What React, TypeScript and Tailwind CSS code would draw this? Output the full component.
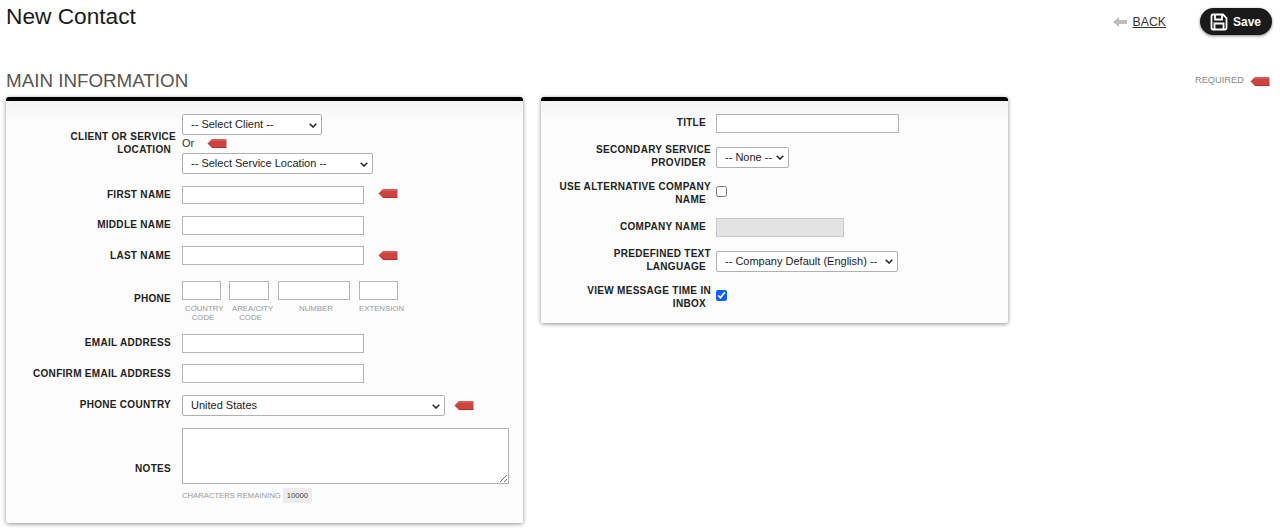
function RequiredTag({ className = "" }: { className?: string }) {
  return (
    <svg width="20" height="11" viewBox="0 0 20 11" className={`shrink-0 ${className}`}>
      <path d="M0.5 5.5 L5 1 H18.5 Q19.5 1 19.5 2 V9 Q19.5 10 18.5 10 H5 Z" fill="#cc4440" />
      <path d="M5 1 H19 V3 H5 Z" fill="#d65a55" />
      <path d="M5 9 H19.5 V10 H5 Z" fill="#b5302c" />
    </svg>
  );
}

function Label({ children, wide = false, flat = false }: { children: React.ReactNode; wide?: boolean; flat?: boolean }) {
  return (
    <label
      className={`${wide ? "ml-[15px] w-[155px]" : "ml-[21px] w-[149px]"} ${flat ? "" : "-mt-[1px] mb-[1px]"} block shrink-0 text-right text-[10px] leading-[13px] font-bold tracking-[0.3px] text-[#222]`}
    >
      {children}
      <span className="inline-block w-[5px]" />
    </label>
  );
}

function TextInput({ className = "" }: { className?: string }) {
  return <input type="text" className={`block border border-[#b5b5b5] bg-white ${className}`} />;
}

function Select({ label, className = "" }: { label: string; className?: string }) {
  return (
    <span className={`relative block ${className}`}>
      <select className="block h-full w-full appearance-none rounded-[2px] border border-[#b0b0b0] bg-white pl-[8px] text-[11px] text-[#222]">
        <option>{label}</option>
      </select>
      <svg width="8" height="5" viewBox="0 0 8 5" className="absolute top-1/2 right-[5px] -mt-[2px]">
        <path d="M0.7 0.7 L4 4 L7.3 0.7" fill="none" stroke="#222" strokeWidth="1.5" />
      </svg>
    </span>
  );
}

function Row({ className = "", children }: { className?: string; children: React.ReactNode }) {
  return <div className={`flex items-center ${className}`}>{children}</div>;
}

function PhonePart({ label, width, inset = "pl-[3px]" }: { label: React.ReactNode; width: string; inset?: string }) {
  return (
    <div className={width}>
      <TextInput className="h-[19px] w-full" />
      <div className={`mt-[4px] text-center text-[7.8px] leading-[9px] whitespace-nowrap text-[#999] ${inset}`}>{label}</div>
    </div>
  );
}

const panelClass =
  "rounded-[3px] border-t-4 border-black bg-gradient-to-b from-[#f3f3f3] to-[#fcfcfc] to-[20px] shadow-[0_1px_4px_rgba(0,0,0,0.45)]";

export default function App() {
  return (
    <div className="h-[528px] w-[1280px] overflow-hidden bg-white font-['Liberation_Sans',Arial,sans-serif]">
      <div className="flex items-start justify-between pr-[8px] pl-[6px]">
        <h1 className="pt-[3px] text-[22.7px] leading-[27px] text-[#1a1a1a]">New Contact</h1>
        <div className="flex items-center pt-[8px]">
          <svg width="14" height="10" viewBox="0 0 14 10" className="mt-[1px] mr-[6px]">
            <path d="M0 5 L6 0 V3 H14 V7 H6 V10 Z" fill="#bdbdbd" />
          </svg>
          <a className="mt-[1px] text-[12.3px] text-[#333] underline">BACK</a>
          <button className="ml-[34px] flex h-[27px] w-[72px] items-center rounded-full bg-[#1a1a1a] pl-[10px] text-[12px] font-bold text-white shadow-[0_1px_3px_rgba(0,0,0,0.5)]">
            <svg width="18" height="18" viewBox="0 0 18 18" fill="none" stroke="#fff" strokeWidth="1.8" className="mr-[5px]">
              <path d="M3 1.5 H13 L16.5 5 V15 Q16.5 16.5 15 16.5 H3 Q1.5 16.5 1.5 15 V3 Q1.5 1.5 3 1.5 Z" />
              <path d="M5 2 V6.5 H12 V2" />
              <path d="M4.5 16 V10.5 H13.5 V16" />
            </svg>
            Save
          </button>
        </div>
      </div>

      <div className="mt-[35px] flex items-center justify-between pr-[10px] pl-[6px]">
        <h2 className="text-[18.8px] leading-[22px] text-[#555]">MAIN INFORMATION</h2>
        <div className="flex items-center gap-[6px] text-[9.3px] text-[#8a8a8a]">
          REQUIRED
          <RequiredTag />
        </div>
      </div>

      <div className="mt-[5px] flex items-start gap-[18px] pl-[6px]">
        <section className={`${panelClass} h-[426px] w-[517px] pt-[13px]`}>
          <Row>
            <Label>CLIENT OR SERVICE LOCATION</Label>
            <div className="ml-[6px] text-[11px] text-[#333]">
              <Select label="-- Select Client --" className="h-[21px] w-[140px]" />
              <div className="flex h-[18px] items-center pb-[2px]">
                Or
                <RequiredTag className="ml-[13px]" />
              </div>
              <Select label="-- Select Service Location --" className="h-[21px] w-[191px]" />
            </div>
          </Row>
          <Row className="mt-[12px]">
            <Label>FIRST NAME</Label>
            <TextInput className="ml-[6px] h-[18px] w-[182px]" />
            <RequiredTag className="mb-[3px] ml-[14px]" />
          </Row>
          <Row className="mt-[12px]">
            <Label>MIDDLE NAME</Label>
            <TextInput className="ml-[6px] h-[19px] w-[182px]" />
          </Row>
          <Row className="mt-[11px]">
            <Label flat>LAST NAME</Label>
            <TextInput className="ml-[6px] h-[19px] w-[182px]" />
            <RequiredTag className="ml-[14px]" />
          </Row>
          <Row className="mt-[16px] items-start">
            <div className="pt-[12px]">
              <Label>PHONE</Label>
            </div>
            <div className="ml-[6px] flex">
              <PhonePart width="w-[39px]" label={<>COUNTRY<br />CODE</>} />
              <PhonePart width="ml-[8px] w-[40px]" label={<>AREA/CITY<br />CODE</>} />
              <PhonePart width="ml-[9px] w-[72px]" label="NUMBER" inset="pl-[4px]" />
              <PhonePart width="ml-[9px] w-[39px]" label="EXTENSION" inset="" />
            </div>
          </Row>
          <Row className="mt-[12px]">
            <Label>EMAIL ADDRESS</Label>
            <TextInput className="ml-[6px] h-[19px] w-[182px]" />
          </Row>
          <Row className="mt-[11px]">
            <Label flat>CONFIRM EMAIL ADDRESS</Label>
            <TextInput className="ml-[6px] h-[19px] w-[182px]" />
          </Row>
          <Row className="mt-[12px]">
            <Label>PHONE COUNTRY</Label>
            <Select label="United States" className="ml-[6px] h-[21px] w-[263px]" />
            <RequiredTag className="ml-[9px]" />
          </Row>
          <Row className="mt-[12px]">
            <div className="pt-[24px]">
              <Label flat>NOTES</Label>
            </div>
            <textarea className="ml-[6px] block h-[56px] w-[327px] border border-[#b0b0b0] bg-white" />
          </Row>
          <div className="mt-[4px] ml-[176px] flex h-[15px] items-center text-[7.7px] text-[#999]">
            CHARACTERS REMAINING
            <span className="ml-[2px] flex h-[15px] items-center bg-[#ececec] px-[4px] text-[#444]">10000</span>
          </div>
        </section>

        <section className={`${panelClass} h-[226px] w-[467px] pt-[13px]`}>
          <Row>
            <Label wide>TITLE</Label>
            <TextInput className="ml-[5px] h-[19px] w-[183px]" />
          </Row>
          <Row className="mt-[11px]">
            <Label wide>SECONDARY SERVICE PROVIDER</Label>
            <Select label="-- None --" className="ml-[5px] h-[21px] w-[73px]" />
          </Row>
          <Row className="mt-[11px]">
            <Label wide>USE ALTERNATIVE COMPANY NAME</Label>
            <input type="checkbox" className="mb-[6px] ml-[5px] h-[11px] w-[11px]" />
          </Row>
          <Row className="mt-[11px]">
            <Label wide>COMPANY NAME</Label>
            <input type="text" disabled className="ml-[5px] block h-[19px] w-[128px] border border-[#c8c8c8] bg-[#e3e3e3]" />
          </Row>
          <Row className="mt-[11px]">
            <Label wide>PREDEFINED TEXT LANGUAGE</Label>
            <Select label="-- Company Default (English) --" className="ml-[5px] h-[21px] w-[182px]" />
          </Row>
          <Row className="mt-[10px]">
            <Label wide flat>VIEW MESSAGE TIME IN INBOX</Label>
            <input type="checkbox" defaultChecked className="mb-[4px] ml-[5px] h-[11px] w-[11px] accent-[#0b5fff]" />
          </Row>
        </section>
      </div>
    </div>
  );
}
